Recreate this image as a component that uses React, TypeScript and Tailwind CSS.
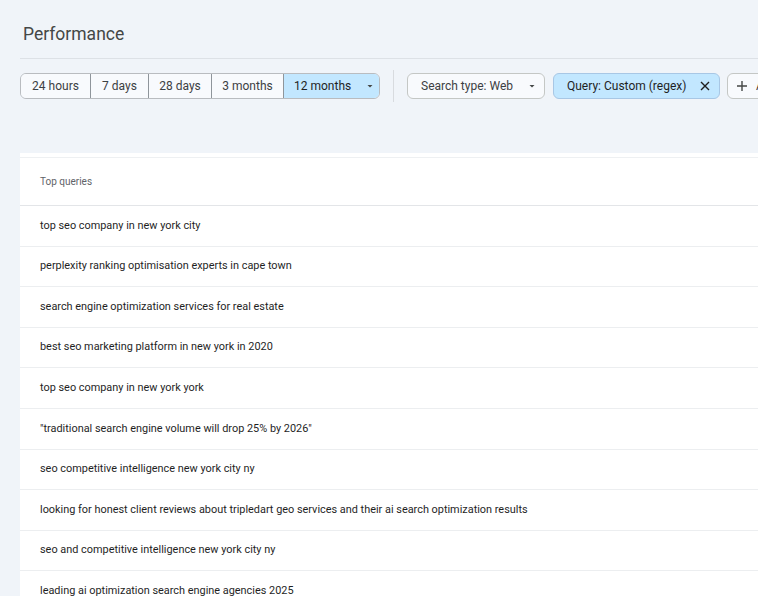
import React from "react";

const rows = [
  "top seo company in new york city",
  "perplexity ranking optimisation experts in cape town",
  "search engine optimization services for real estate",
  "best seo marketing platform in new york in 2020",
  "top seo company in new york york",
  "\"traditional search engine volume will drop 25% by 2026\"",
  "seo competitive intelligence new york city ny",
  "looking for honest client reviews about tripledart geo services and their ai search optimization results",
  "seo and competitive intelligence new york city ny",
  "leading ai optimization search engine agencies 2025",
];

const Caret = () => (
  <svg width="10" height="10" viewBox="0 0 10 10" className="ml-[14px] shrink-0">
    <path d="M2.5 4 L5 6.5 L7.5 4 Z" fill="#444746" />
  </svg>
);

export default function App() {
  const segs = [
    { t: "24 hours", w: "w-[69px]" },
    { t: "7 days", w: "w-[58px]" },
    { t: "28 days", w: "w-[63px]" },
    { t: "3 months", w: "w-[72px]" },
  ];
  return (
    <div
      className="w-[758px] h-[596px] overflow-hidden bg-[#f0f4f9] text-[#1f1f1f]"
      style={{ fontFamily: "Roboto, 'Liberation Sans', sans-serif" }}
    >
      <div className="pl-[20px]">
        <div className="h-[59px] flex items-center pl-[3px] pt-[11px] text-[17.5px] text-[#444746] border-b border-[#dde1e6]">
          Performance
        </div>
        <div className="flex items-center h-[54px] whitespace-nowrap">
          <div className="flex shrink-0 h-[26px] rounded-[6px] border border-[#b9bcc0] overflow-hidden text-[12px] text-[#3c4043]">
            {segs.map((s, i) => (
              <div
                key={s.t}
                className={`${s.w} shrink-0 flex items-center justify-center bg-[#f8fafd] ${i > 0 ? "border-l border-[#8f959b]" : ""}`}
              >
                {s.t}
              </div>
            ))}
            <div className="w-[96px] shrink-0 flex items-center pl-[10px] bg-[#c2e7ff] border-l border-[#8f959b] text-[#1f1f1f]">
              12 months
              <Caret />
            </div>
          </div>
          <div className="w-px shrink-0 h-[32px] bg-[#d8dbdf] ml-[13px] mr-[13px]" />
          <div className="h-[26px] w-[138px] shrink-0 flex items-center pl-[13px] rounded-[6px] border border-[#c4c7c5] bg-[#f8fafd] text-[12px] text-[#3c4043]">
            Search type: Web
            <Caret />
          </div>
          <div className="ml-[8px] h-[26px] w-[167px] shrink-0 flex items-center pl-[13px] rounded-[6px] border border-[#a8c7e5] bg-[#c2e7ff] text-[12px] text-[#1f1f1f]">
            Query: Custom (regex)
            <svg width="12" height="12" viewBox="0 0 12 12" className="ml-[13px] shrink-0">
              <path d="M2 2 L10 10 M10 2 L2 10" stroke="#1f1f1f" strokeWidth="1.4" />
            </svg>
          </div>
          <div className="ml-[7px] h-[26px] w-[80px] shrink-0 flex items-center pl-[8px] rounded-[6px] border border-[#c4c7c5] bg-[#f8fafd] text-[12px] text-[#3c4043]">
            <svg width="12" height="12" viewBox="0 0 12 12" className="shrink-0">
              <path d="M6 1 V11 M1 6 H11" stroke="#444746" strokeWidth="1.4" />
            </svg>
            <span className="ml-[8px]">Add filter</span>
          </div>
        </div>
        <div className="h-[40px]" />
        <div className="bg-white w-[760px]">
          <div className="h-[5px] border-b border-[#eef0f2]" />
          <div className="h-[48px] flex items-center pl-[20px] text-[10px] text-[#5f6368] border-b border-[#e3e5e8]">
            Top queries
          </div>
          {rows.map((r) => (
            <div
              key={r}
              className="h-[40.6px] flex items-center pl-[20px] text-[10.9px] text-[#1f1f1f] border-b border-[#eceef0] whitespace-nowrap"
            >
              {r}
            </div>
          ))}
        </div>
      </div>
    </div>
  );
}
